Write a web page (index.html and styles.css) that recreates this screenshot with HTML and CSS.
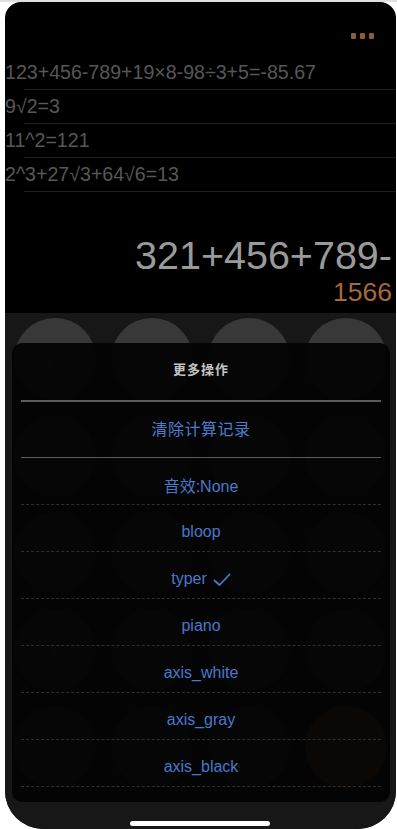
FILE: index.html
```html
<!DOCTYPE html>
<html>
<head>
<meta charset="utf-8">
<link rel="stylesheet" href="styles.css">
</head>
<body>
<div class="strip"></div>
<div class="phone">
  <div class="topbar">
    <div class="dots"><span></span><span></span><span></span></div>
  </div>
  <div class="history">
    <div class="hrow"><span>123+456-789+19×8-98÷3+5=-85.67</span></div>
    <div class="hrow"><span>9√2=3</span></div>
    <div class="hrow"><span>11^2=121</span></div>
    <div class="hrow"><span>2^3+27√3+64√6=13</span></div>
  </div>
  <div class="display">
    <div class="expr">321+456+789-</div>
    <div class="result">1566</div>
  </div>
  <div class="keypad">
    <div class="key">C</div><div class="key">←</div><div class="key">%</div><div class="key">÷</div>
    <div class="key">7</div><div class="key">8</div><div class="key">9</div><div class="key">×</div>
    <div class="key">4</div><div class="key">5</div><div class="key">6</div><div class="key">-</div>
    <div class="key">1</div><div class="key">2</div><div class="key">3</div><div class="key">+</div>
    <div class="key">√</div><div class="key">0</div><div class="key">.</div><div class="key eq">=</div>
  </div>

  <div class="sheet">
    <div class="sheet-title">更多操作</div>
    <div class="solid"></div>
    <div class="clear">清除计算记录</div>
    <div class="solid"></div>
    <ul class="opts">
      <li>音效:None</li>
      <li>bloop</li>
      <li>typer <svg class="check" width="18" height="14" viewBox="0 0 18 14"><path d="M1.5 7.5 L6.5 12 L16.5 1.5" fill="none" stroke="#4a78cc" stroke-width="1.8" stroke-linecap="round" stroke-linejoin="round"/></svg></li>
      <li>piano</li>
      <li>axis_white</li>
      <li>axis_gray</li>
      <li>axis_black</li>
    </ul>
  </div>
  <div class="home"></div>
</div>
</body>
</html>
```

FILE: styles.css
```css
html, body {
  margin: 0;
  padding: 0;
  background: #fff;
}
body {
  width: 397px;
  height: 829px;
  overflow: hidden;
  font-family: "Liberation Sans", "Noto Sans CJK SC", sans-serif;
}
.strip {
  height: 2px;
  background: #e0e0e0;
}
.phone {
  position: relative;
  margin: 0 1px 0 5px;
  height: 827px;
  background: #000;
  border-radius: 16px 16px 38px 38px;
  overflow: hidden;
  display: flex;
  flex-direction: column;
}
.topbar {
  height: 54px;
  display: flex;
  justify-content: flex-end;
}
.dots {
  display: flex;
  gap: 4px;
  margin-top: 31px;
  margin-right: 22px;
}
.dots span {
  width: 5px;
  height: 6px;
  border-radius: 1px;
  background: #8b5d3d;
}
.history {
  display: flex;
  flex-direction: column;
}
.hrow {
  height: 34px;
  position: relative;
  display: flex;
  align-items: center;
  font-size: 19.6px;
  color: #575757;
  white-space: nowrap;
}
.hrow span {
  margin-top: -1px;
}
.hrow::after {
  content: "";
  position: absolute;
  left: 19px;
  right: 0;
  bottom: 0;
  height: 1px;
  background: #1e1e1e;
}
.display {
  height: 121px;
  display: flex;
  flex-direction: column;
  align-items: flex-end;
  justify-content: flex-end;
  padding-right: 4px;
  padding-bottom: 6px;
  box-sizing: border-box;
}
.expr {
  font-size: 39.5px;
  color: #9a9a9a;
  white-space: nowrap;
  line-height: 44px;
}
.result {
  font-size: 26.5px;
  color: #a8693a;
  line-height: 30px;
}
.keypad {
  flex: 1;
  background: #171717;
  display: grid;
  grid-template-columns: repeat(4, 82px);
  grid-auto-rows: 82px;
  column-gap: 15px;
  row-gap: 15px;
  padding: 5px 0 0 9px;
}
.key {
  border-radius: 50%;
  background: #383838;
  color: #555;
  font-size: 24px;
  display: flex;
  align-items: center;
  justify-content: center;
  padding-top: 10px;
  box-sizing: border-box;
}
.key.eq {
  background: #a0581f;
}
.sheet {
  position: absolute;
  left: 7px;
  right: 6px;
  top: 341px;
  height: 459px;
  background: rgba(3, 3, 3, 0.95);
  border-radius: 10px;
  display: flex;
  flex-direction: column;
  padding: 0 9px;
  box-sizing: border-box;
}
.sheet-title {
  height: 57px;
  display: flex;
  align-items: center;
  justify-content: center;
  color: #c4c4c4;
  font-size: 13px;
  font-weight: bold;
  letter-spacing: 1px;
  padding-bottom: 6px;
  box-sizing: border-box;
}
.solid {
  height: 1.5px;
  background: #5b5b5b;
}
.clear {
  height: 55px;
  display: flex;
  align-items: center;
  justify-content: center;
  color: #4d7dd0;
  font-size: 16px;
  letter-spacing: 0.5px;
  padding-bottom: 3px;
  box-sizing: border-box;
}
.opts {
  list-style: none;
  margin: 0;
  padding: 0;
}
.opts li {
  height: 47px;
  border-bottom: 1px dashed #2e2e2e;
  display: flex;
  align-items: center;
  justify-content: center;
  gap: 6px;
  color: #4a78cc;
  font-size: 16px;
  padding-top: 8px;
  box-sizing: border-box;
}
.check {
  margin-top: 1px;
}
.home {
  position: absolute;
  left: 125px;
  bottom: 3px;
  width: 140px;
  height: 5px;
  border-radius: 3px;
  background: #fff;
}
```
